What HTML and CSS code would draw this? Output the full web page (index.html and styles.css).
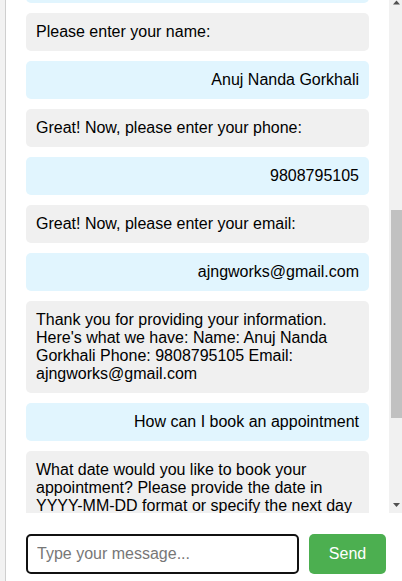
FILE: index.html
```html
<!DOCTYPE html>
<html lang="en">
<head>
<meta charset="utf-8">
<title>Chatbot</title>
<link rel="stylesheet" href="styles.css">
</head>
<body>
<div class="chat-container">
  <div class="chat-body">
    <div class="messages" id="messages">
      <div class="message bot">Hello! How can I help you today?</div>
      <div class="message user">What services do you offer?</div>
      <div class="message bot">We offer consultations, document analysis and appointment booking.</div>
      <div class="message user">Call me</div>
      <div class="message bot">Sure! Let me collect your details.</div>
      <div class="message user">Okay</div>
      <div class="message bot">Let's get started.</div>
      <div class="message user">Sure</div>
      <div class="message bot">Alright.</div>
      <div class="message user">Go ahead</div>
      <div class="message bot" id="anchor">Please enter your name:</div>
      <div class="message user">Anuj Nanda Gorkhali</div>
      <div class="message bot">Great! Now, please enter your phone:</div>
      <div class="message user">9808795105</div>
      <div class="message bot">Great! Now, please enter your email:</div>
      <div class="message user">ajngworks@gmail.com</div>
      <div class="message bot">Thank you for providing your information. Here's what we have: Name: Anuj Nanda Gorkhali Phone: 9808795105 Email: ajngworks@gmail.com</div>
      <div class="message user">How can I book an appointment</div>
      <div class="message bot">What date would you like to book your appointment? Please provide the date in YYYY-MM-DD format or specify the next day (e.g., 'next Monday').</div>
      <div class="message user">next Monday</div>
      <div class="message bot">Your appointment has been booked for next Monday. We will contact you at 9808795105 or at ajngworks@gmail.com to confirm the time.</div>
    </div>
    <div class="scrollbar" aria-hidden="true">
      <div class="sb-btn">
        <svg width="15" height="15" viewBox="0 0 15 15"><path d="M4 9.5 L11 9.5 L7.5 5.5 Z" fill="#505050"/></svg>
      </div>
      <div class="sb-track"><div class="sb-thumb" id="thumb"></div></div>
      <div class="sb-btn">
        <svg width="15" height="15" viewBox="0 0 15 15"><path d="M4 5 L11 5 L7.5 9 Z" fill="#505050"/></svg>
      </div>
    </div>
  </div>
  <form class="input-row" onsubmit="return false;">
    <input class="msg-input" type="text" placeholder="Type your message...">
    <button class="send-btn" type="submit">Send</button>
  </form>
</div>
<script src="script.js"></script>
</body>
</html>
```

FILE: styles.css
```css
html, body {
  margin: 0;
  padding: 0;
  overflow: hidden;
}
body {
  background: #f2f2f2;
  font-family: "Liberation Sans", Arial, sans-serif;
  font-size: 16px;
  color: #000;
  height: 581px;
}
.chat-container {
  margin-left: 5px;
  width: 398px;
  height: 600px;
  background: #fff;
  border-left: 1px solid #cfcfcf;
  display: flex;
  flex-direction: column;
}
.chat-body {
  display: flex;
  margin-top: -5px;
  height: 518px;
  flex-shrink: 0;
}
.messages {
  position: relative;
  flex: 1;
  min-width: 0;
  box-sizing: border-box;
  overflow-y: scroll;
  scrollbar-width: none;
  padding: 20px;
  display: flex;
  flex-direction: column;
  gap: 10px;
}
.scrollbar {
  width: 15px;
  flex-shrink: 0;
  background: #f1f1f1;
  display: flex;
  flex-direction: column;
}
.sb-btn {
  height: 15px;
  flex-shrink: 0;
}
.sb-btn svg {
  display: block;
}
.sb-track {
  flex: 1;
  padding: 0 2px;
}
.sb-thumb {
  background: #c1c1c1;
}
.message {
  padding: 10px;
  border-radius: 5px;
  line-height: 18px;
  flex-shrink: 0;
}
.message.bot {
  background: #f0f0f0;
  text-align: left;
}
.message.user {
  background: #e1f5fe;
  text-align: right;
}
.input-row {
  display: flex;
  gap: 10px;
  margin: 0;
  padding: 21px 18px 0 20px;
}
.msg-input {
  flex: 1;
  height: 40px;
  box-sizing: border-box;
  border: 2px solid #111;
  border-radius: 5px;
  padding: 0 9px;
  font-family: "Liberation Sans", Arial, sans-serif;
  font-size: 16px;
  outline: none;
}
.msg-input::placeholder {
  color: #777;
}
.send-btn {
  width: 77px;
  height: 40px;
  border: none;
  border-radius: 5px;
  background: #4caf50;
  color: #fff;
  font-family: "Liberation Sans", Arial, sans-serif;
  font-size: 16px;
  padding: 0;
}
```

FILE: script.js
```js
(function () {
  var box = document.getElementById('messages');
  var anchor = document.getElementById('anchor');
  var thumb = document.getElementById('thumb');
  box.scrollTop = anchor.offsetTop - 18;

  var track = thumb.parentNode;
  var trackH = track.clientHeight;
  var ratio = box.clientHeight / box.scrollHeight;
  var thumbH = Math.round(trackH * ratio);
  var maxScroll = box.scrollHeight - box.clientHeight;
  var offset = maxScroll > 0 ? Math.round((trackH - thumbH) * box.scrollTop / maxScroll) : 0;
  thumb.style.height = thumbH + 'px';
  thumb.style.marginTop = offset + 'px';
})();
```
